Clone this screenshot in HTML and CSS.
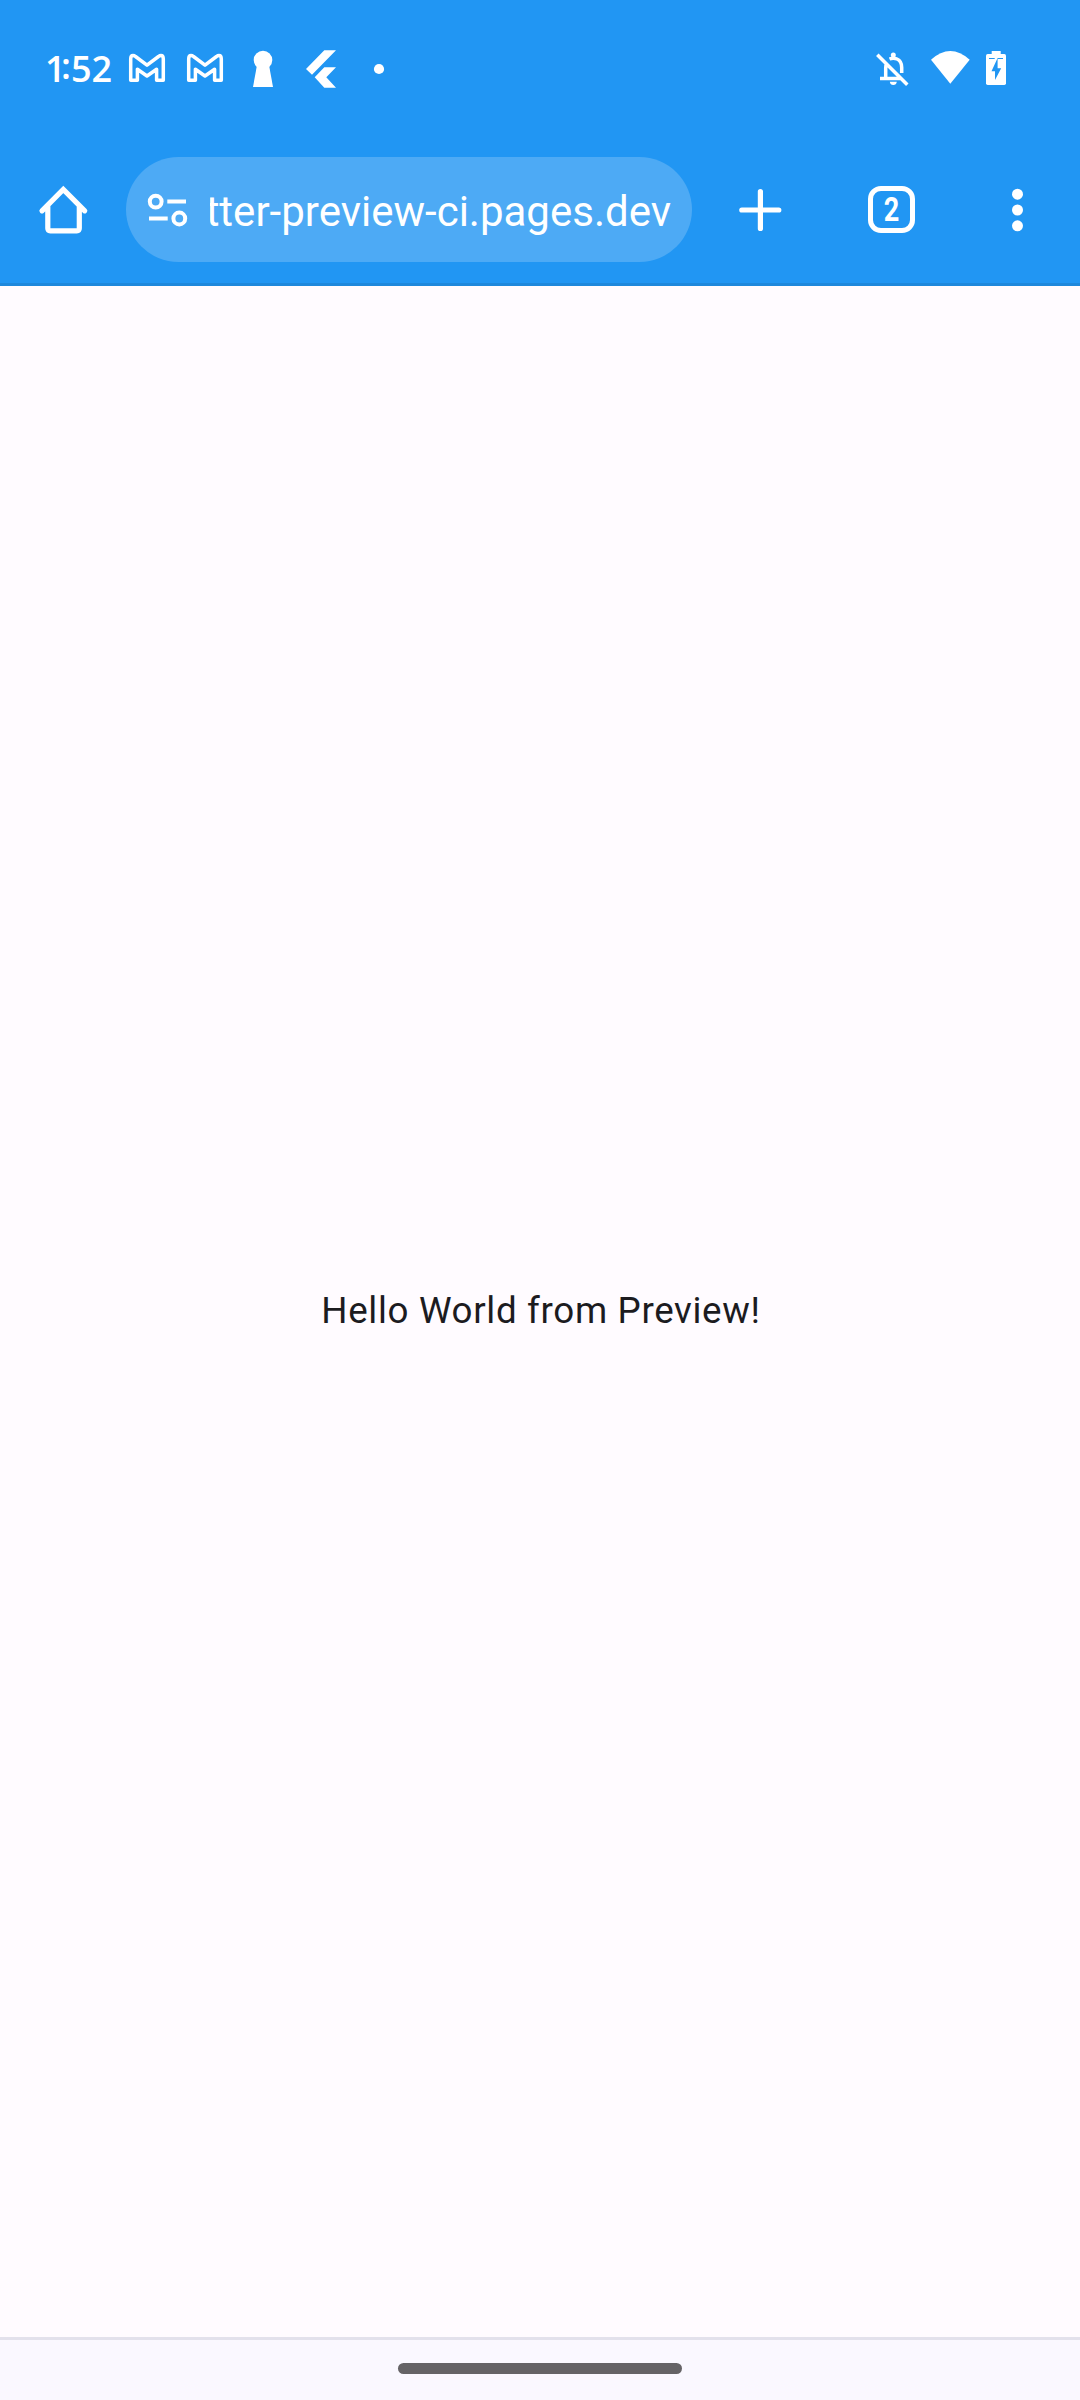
FILE: index.html
```html
<!DOCTYPE html>
<html lang="en">
<head>
<meta charset="utf-8">
<title>Preview</title>
<link rel="stylesheet" href="styles.css">
</head>
<body>
<div class="screen">
  <header class="chrome">
    <div class="status">
      <span class="clock"><span class="one">1</span><span class="colon">:</span>52</span>
      <svg class="slot" viewBox="-29 -40 58 80"><path class="line" d="M-16.3 11.3V-10Q-16.3-13.5-14-13.5Q-12.7-13.5-11.5-12.5L0-3.8L11.5-12.5Q12.7-13.5 14-13.5Q16.3-13.5 16.3-10V11.3H9.6V.3L0 7L-9.6.3V11.3Z"/></svg>
      <svg class="slot" viewBox="-29 -40 58 80"><path class="line" d="M-16.3 11.3V-10Q-16.3-13.5-14-13.5Q-12.7-13.5-11.5-12.5L0-3.8L11.5-12.5Q12.7-13.5 14-13.5Q16.3-13.5 16.3-10V11.3H9.6V.3L0 7L-9.6.3V11.3Z"/></svg>
      <svg class="slot" viewBox="-29 -40 58 80"><circle cy="-9" r="9.3"/><path d="M-6-4L-10 18H10L6-4Z"/></svg>
      <svg class="slot" viewBox="-29 -40 58 80"><path d="M-15 0L3.3-18.7H15L-9 5.7ZM-6.3 8.3L3.3-1.7H15L5.3 8.3L15 18.7H3.3Z"/></svg>
      <svg class="slot" viewBox="-29 -40 58 80"><circle r="5.1"/></svg>
      <span class="spacer"></span>
      <svg class="slot" viewBox="-29 -40 58 80"><path class="line" d="M-14.7-14.3L15.3 15.7M-12 9.5H9.5M-6.3 9.5V-1Q-6.3-4-4.7-6.2M-2.5-10Q1.3-11.6 5-10Q9.7-8 9.7-1.5V4"/><circle cx="1.3" cy="-14" r="2.5"/><path d="M-2.2 12.7H4.8Q4.3 16 1.3 16Q-1.7 16-2.2 12.7Z"/></svg>
      <svg class="slot" viewBox="-29 -40 58 80"><path d="M-19-9.3Q.3-26.7 19.7-9.3L.3 14.7Z"/></svg>
      <svg class="slot battery" viewBox="-17 -40 34 80"><rect x="-10" y="-15" width="20" height="31" rx="1.7"/><rect x="-4.3" y="-18" width="9" height="4"/><path class="cut" d="M-7-11H-1.3V-10H-7ZM1.3-11H7V-10H1.3ZM1.6-11L-4.5 2.3H-1V11L5.2-.8H1.6Z"/></svg>
    </div>
    <div class="toolbar">
      <svg class="tool" viewBox="-63 -40 126 80"><path class="line bold" d="M-21 .8L.3-20.5L21.7 .8M-15.2-4V18.3Q-15.2 20.8-12.7 20.8H13.8Q16.3 20.8 16.3 18.3V-4"/></svg>
      <div class="omnibox">
        <svg class="tune" viewBox="0 -40 84 80"><g class="ring"><circle cx="29.7" cy="-8.4" r="5.9"/><circle cx="53.3" cy="8.5" r="5.9"/><path d="M41.3-8.5H60M23 8.5H41.7"/></g></svg>
        <div class="url">tter-preview-ci.pages.dev</div>
      </div>
      <svg class="tool plus" viewBox="-68 -40 136 80"><path class="line bold" d="M-18.2 0H18.8M.4-18.5V18.5"/></svg>
      <div class="tool tabs"><span class="count"><span class="digit">2</span></span></div>
      <svg class="tool" viewBox="-63 -40 126 80"><circle cx=".5" cy="-15.8" r="5.5"/><circle cx=".5" r="5.5"/><circle cx=".5" cy="15.8" r="5.5"/></svg>
    </div>
  </header>
  <main class="page">Hello World from Preview!</main>
  <footer class="nav"><span class="handle"></span></footer>
</div>
</body>
</html>
```

FILE: styles.css
```css
body {
  margin: 0;
  font-family: Roboto, "Noto Sans", sans-serif;
}
.screen {
  display: flex;
  flex-direction: column;
  width: 1080px;
  height: 2400px;
  background: #fffbff;
}
.chrome {
  background: #2196f3;
  border-bottom: 3px solid #1e88dc;
  color: #fff;
}
svg {
  display: block;
  flex: none;
  fill: #fff;
}
.line {
  fill: none;
  stroke: #fff;
  stroke-width: 3.5;
  stroke-linejoin: round;
}
.bold {
  stroke-width: 5.2;
  stroke-linecap: round;
  stroke-linejoin: miter;
}
.cut { fill: #2196f3; }
.status {
  box-sizing: border-box;
  display: flex;
  align-items: center;
  height: 136px;
  padding: 2px 67px 0 45px;
}
.clock {
  width: 73px;
  font: 600 36px/46px "Open Sans", sans-serif;
  white-space: nowrap;
}
.one { letter-spacing: -4.5px; }
.colon {
  display: inline-block;
  transform: translateY(-3px);
}
.slot {
  width: 58px;
  height: 80px;
}
.battery { width: 34px; }
.spacer { flex: 1; }
.toolbar {
  display: flex;
  align-items: center;
  height: 147px;
}
.tool {
  width: 126px;
  height: 80px;
}
.plus { width: 136px; }
.omnibox {
  display: flex;
  align-items: center;
  width: 566px;
  height: 105px;
  border-radius: 53px;
  background: #4daaf5;
}
.tune {
  width: 84px;
  height: 80px;
}
.ring {
  fill: none;
  stroke: #fff;
  stroke-width: 4;
}
.url {
  display: flex;
  justify-content: flex-end;
  width: 461px;
  padding-top: 5px;
  overflow: hidden;
  font-size: 42px;
  line-height: 54px;
  white-space: nowrap;
}
.tabs {
  display: flex;
  align-items: center;
  justify-content: center;
}
.count {
  box-sizing: border-box;
  display: flex;
  align-items: center;
  justify-content: center;
  width: 47px;
  height: 47px;
  border: 5px solid #fff;
  border-radius: 13px;
}
.digit {
  font-size: 33px;
  font-weight: 700;
  line-height: 37px;
  transform: scaleX(.82);
}
.page {
  flex: 1;
  display: flex;
  align-items: center;
  justify-content: center;
  padding: 0 0 2px 2px;
  font-size: 36.75px;
  letter-spacing: .656px;
  color: #1c1b1f;
}
.nav {
  display: flex;
  justify-content: center;
  height: 60px;
  border-top: 3px solid #e3e1ec;
  background: #faf8ff;
}
.handle {
  width: 284px;
  height: 11px;
  margin-top: 23px;
  border-radius: 6px;
  background: #656366;
}
```
